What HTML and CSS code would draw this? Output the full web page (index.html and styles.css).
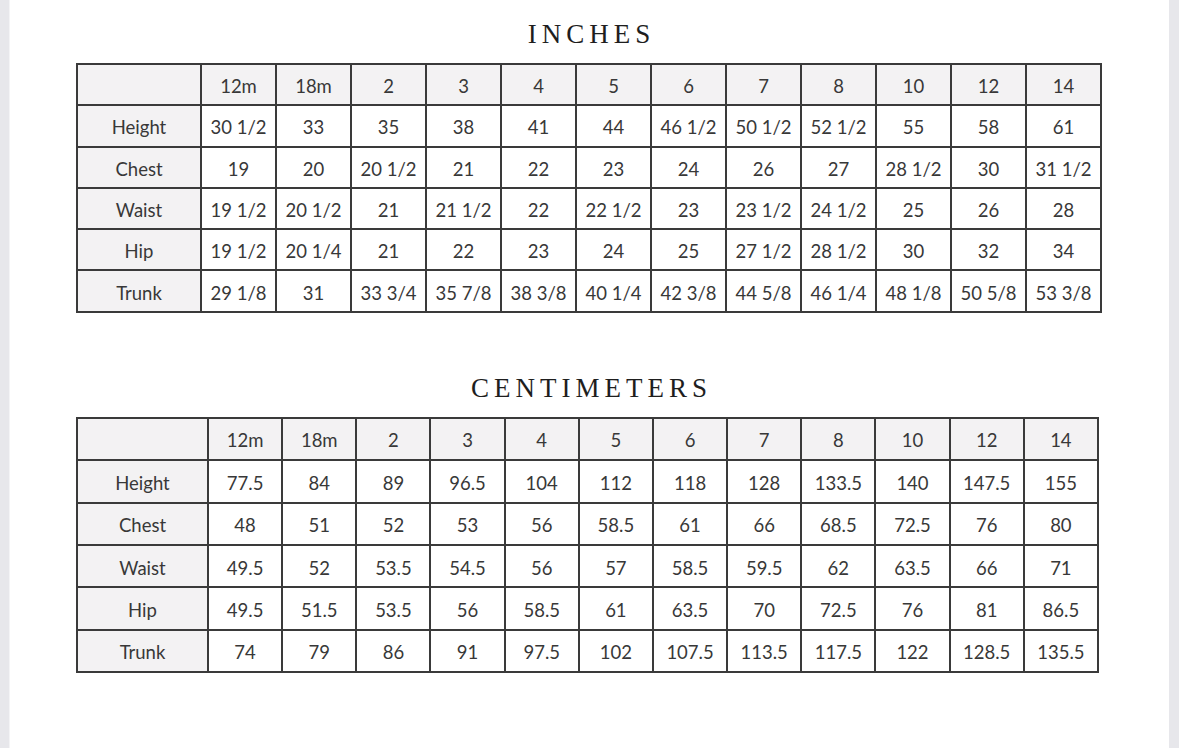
FILE: index.html
```html
<!DOCTYPE html>
<html lang="en">
<head>
<meta charset="utf-8">
<title>Size Chart</title>
<link rel="stylesheet" href="styles.css">
</head>
<body>
<div class="page">
  <h2 class="title">INCHES</h2>
  <table class="chart chart-in">
    <colgroup>
      <col class="c-label"><col><col><col><col><col><col><col><col><col><col><col><col>
    </colgroup>
    <tr class="head"><td class="label"></td><td>12m</td><td>18m</td><td>2</td><td>3</td><td>4</td><td>5</td><td>6</td><td>7</td><td>8</td><td>10</td><td>12</td><td>14</td></tr>
    <tr><td class="label">Height</td><td>30 1/2</td><td>33</td><td>35</td><td>38</td><td>41</td><td>44</td><td>46 1/2</td><td>50 1/2</td><td>52 1/2</td><td>55</td><td>58</td><td>61</td></tr>
    <tr><td class="label">Chest</td><td>19</td><td>20</td><td>20 1/2</td><td>21</td><td>22</td><td>23</td><td>24</td><td>26</td><td>27</td><td>28 1/2</td><td>30</td><td>31 1/2</td></tr>
    <tr><td class="label">Waist</td><td>19 1/2</td><td>20 1/2</td><td>21</td><td>21 1/2</td><td>22</td><td>22 1/2</td><td>23</td><td>23 1/2</td><td>24 1/2</td><td>25</td><td>26</td><td>28</td></tr>
    <tr><td class="label">Hip</td><td>19 1/2</td><td>20 1/4</td><td>21</td><td>22</td><td>23</td><td>24</td><td>25</td><td>27 1/2</td><td>28 1/2</td><td>30</td><td>32</td><td>34</td></tr>
    <tr><td class="label">Trunk</td><td>29 1/8</td><td>31</td><td>33 3/4</td><td>35 7/8</td><td>38 3/8</td><td>40 1/4</td><td>42 3/8</td><td>44 5/8</td><td>46 1/4</td><td>48 1/8</td><td>50 5/8</td><td>53 3/8</td></tr>
  </table>

  <h2 class="title title-cm">CENTIMETERS</h2>
  <table class="chart chart-cm">
    <colgroup>
      <col class="c-label"><col><col><col><col><col><col><col><col><col><col><col><col>
    </colgroup>
    <tr class="head"><td class="label"></td><td>12m</td><td>18m</td><td>2</td><td>3</td><td>4</td><td>5</td><td>6</td><td>7</td><td>8</td><td>10</td><td>12</td><td>14</td></tr>
    <tr><td class="label">Height</td><td>77.5</td><td>84</td><td>89</td><td>96.5</td><td>104</td><td>112</td><td>118</td><td>128</td><td>133.5</td><td>140</td><td>147.5</td><td>155</td></tr>
    <tr><td class="label">Chest</td><td>48</td><td>51</td><td>52</td><td>53</td><td>56</td><td>58.5</td><td>61</td><td>66</td><td>68.5</td><td>72.5</td><td>76</td><td>80</td></tr>
    <tr><td class="label">Waist</td><td>49.5</td><td>52</td><td>53.5</td><td>54.5</td><td>56</td><td>57</td><td>58.5</td><td>59.5</td><td>62</td><td>63.5</td><td>66</td><td>71</td></tr>
    <tr><td class="label">Hip</td><td>49.5</td><td>51.5</td><td>53.5</td><td>56</td><td>58.5</td><td>61</td><td>63.5</td><td>70</td><td>72.5</td><td>76</td><td>81</td><td>86.5</td></tr>
    <tr><td class="label">Trunk</td><td>74</td><td>79</td><td>86</td><td>91</td><td>97.5</td><td>102</td><td>107.5</td><td>113.5</td><td>117.5</td><td>122</td><td>128.5</td><td>135.5</td></tr>
  </table>
</div>
</body>
</html>
```

FILE: styles.css
```css
* { box-sizing: border-box; }

html, body {
  margin: 0;
  padding: 0;
  height: 748px;
  overflow: hidden;
  background: #e7e7eb;
}

.page {
  width: 1160px;
  height: 748px;
  margin-left: 9px;
  background: #ffffff;
  border-left: 1px solid #f4f4f6;
  padding: 21px 0 0 66px;
}

.title {
  margin: 0 0 15px 0;
  width: 1026px;
  text-align: center;
  font-family: "Liberation Serif", "DejaVu Serif", serif;
  font-weight: normal;
  font-size: 27px;
  line-height: 27px;
  letter-spacing: 5px;
  text-indent: 5px;
  color: #1e1e1e;
}

.title-cm {
  margin-top: 62px;
}

.chart {
  border-collapse: separate;
  border-spacing: 0;
  table-layout: fixed;
  border-top: 2px solid #3a3a3a;
  border-left: 2px solid #3a3a3a;
  font-family: Lato, "Open Sans", sans-serif;
  font-size: 18.5px;
  color: #383838;
}

.chart td {
  border-right: 2px solid #3a3a3a;
  border-bottom: 2px solid #3a3a3a;
  padding: 3px 0 0 0;
  text-align: center;
  vertical-align: middle;
  white-space: nowrap;
  background: #ffffff;
}

.chart td.label,
.chart tr.head td {
  background: #f3f2f3;
}

.chart-in { width: 1026px; }
.chart-in col { width: 75px; }
.chart-in col.c-label { width: 124px; }
.chart-in td { height: 41.3px; }

.chart-cm { width: 1023px; }
.chart-cm col { width: 74.17px; }
.chart-cm col.c-label { width: 131px; }
.chart-cm td { height: 42.4px; }
```
